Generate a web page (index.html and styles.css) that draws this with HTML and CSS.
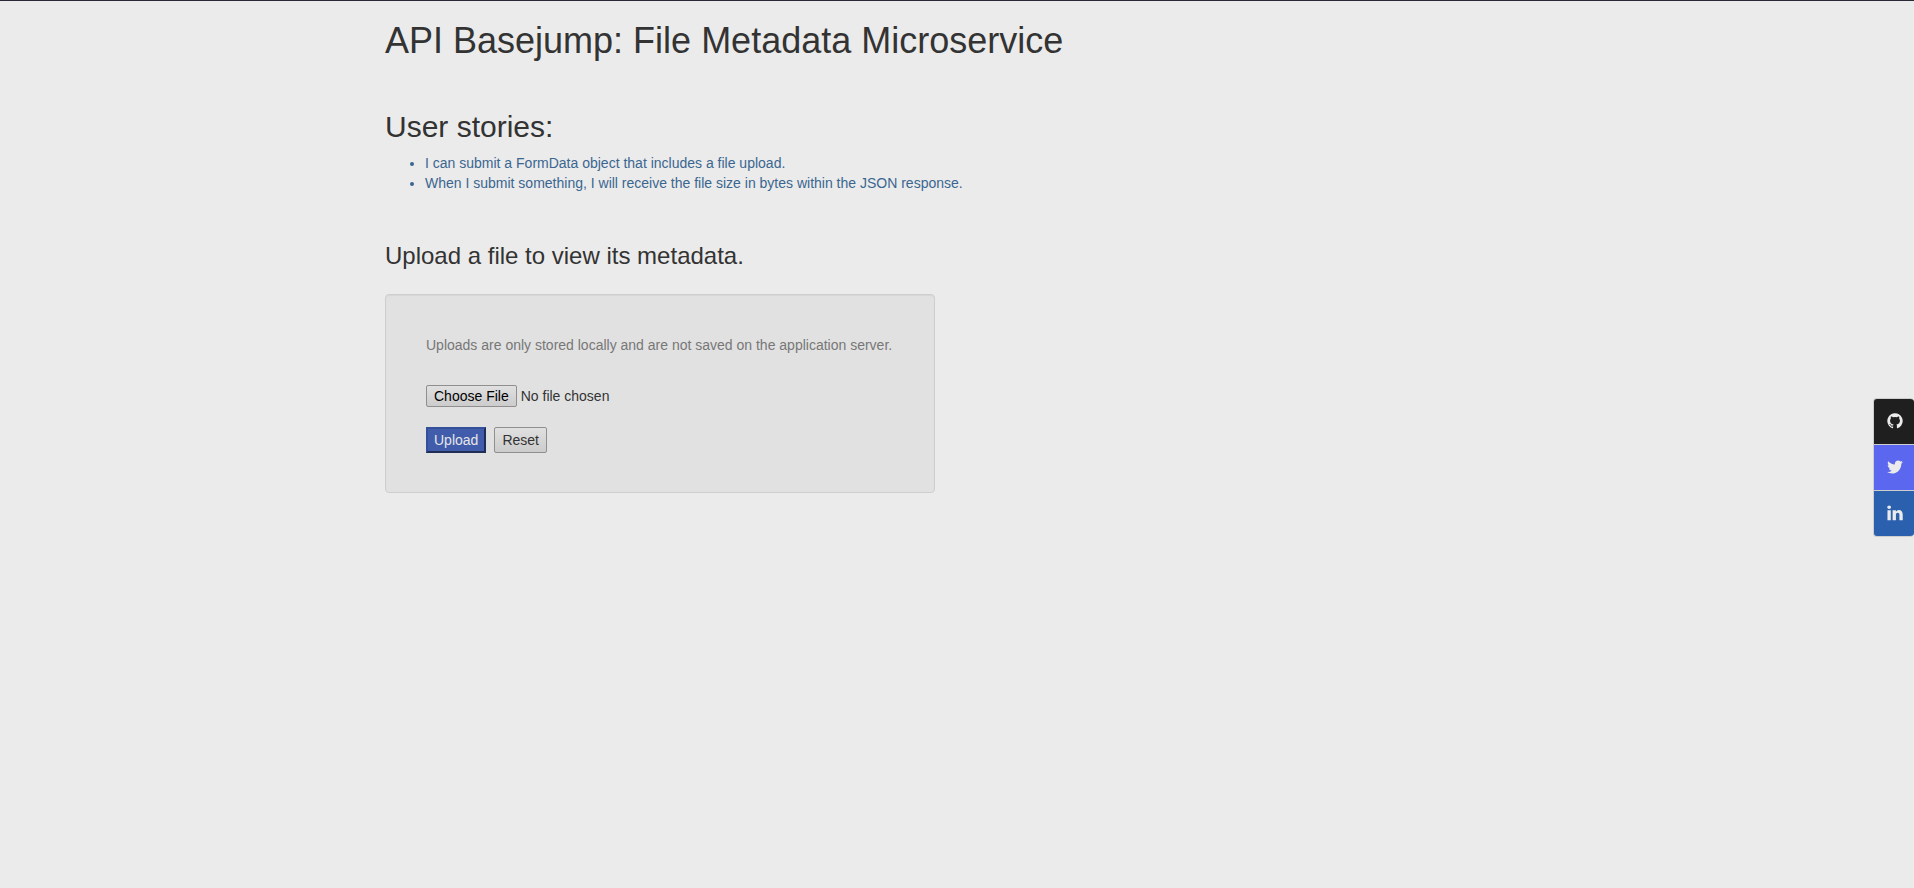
FILE: index.html
```html
<!DOCTYPE html>
<html lang="en">
<head>
<meta charset="utf-8">
<meta name="viewport" content="width=device-width, initial-scale=1">
<title>API Basejump: File Metadata Microservice</title>
<link rel="stylesheet" href="styles.css">
</head>
<body>
<main class="container">
  <h1 class="title">API Basejump: File Metadata Microservice</h1>
  <section class="section">
    <h2 class="stories-title">User stories:</h2>
    <ul class="stories">
      <li>I can submit a FormData object that includes a file upload.</li>
      <li>When I submit something, I will receive the file size in bytes within the JSON response.</li>
    </ul>
  </section>
  <section class="section">
    <h3 class="upload-title">Upload a file to view its metadata.</h3>
    <form class="well">
      <label class="note" for="file">Uploads are only stored locally and are not saved on the application server.</label>
      <input class="file" id="file" type="file" name="file">
      <div class="actions">
        <button class="btn btn-upload" type="submit">Upload</button>
        <button class="btn" type="reset">Reset</button>
      </div>
    </form>
  </section>
</main>
<nav class="social" aria-label="Social links">
  <a class="social-link github" href="#github" aria-label="GitHub"><svg class="icon" viewBox="0 0 1792 1792"><path d="M896 128q209 0 385.5 103t279.5 279.5 103 385.5q0 251-146.5 451.5t-378.5 277.5q-27 5-40-7t-13-30q0-3 .5-76.5t.5-134.5q0-97-52-142 57-6 102.5-18t94-39 81-66.5 53-105 20.5-150.5q0-119-79-206 37-91-8-204-28-9-81 11t-92 44l-38 24q-93-26-192-26t-192 26q-16-11-42.5-27t-83.500-38.500-85-13.500q-45 113-8 204-79 87-79 206 0 85 20.500 150t52.500 105 80.500 67 94 39 102.500 18q-39 36-49 103-21 10-45 15t-57 5-65.500-21.500-55.500-62.500q-19-32-48.500-52t-49.500-24l-20-3q-21 0-29 4.500t-5 11.500 9 14 13 12l7 5q22 10 43.500 38t31.500 51l10 23q13 38 44 61.500t67 30 69.500 7 55.500-3.500l23-4q0 38 .5 88.500t.5 54.500q0 18-13 30t-40 7q-232-77-378.500-277.500t-146.500-451.500q0-209 103-385.500t279.500-279.500 385.500-103z"/></svg></a>
  <a class="social-link twitter" href="#twitter" aria-label="Twitter"><svg class="icon" viewBox="0 0 1792 1792"><path d="M1684 408q-67 98-162 167 1 14 1 42 0 130-38 259.500t-115.500 248.500-184.500 210.500-258 146-323 54.500q-271 0-496-145 35 4 78 4 225 0 401-138-105-2-188-64.500t-114-159.500q33 5 61 5 43 0 85-11-112-23-185.500-111.500t-73.500-205.500v-4q68 38 146 41-66-44-105-115t-39-154q0-88 44-163 121 149 294.500 238.500t371.500 99.500q-8-38-8-74 0-134 94.500-228.500t228.500-94.500q140 0 236 102 109-21 205-78-37 115-142 178 93-10 186-50z"/></svg></a>
  <a class="social-link linkedin" href="#linkedin" aria-label="LinkedIn"><svg class="icon" viewBox="0 0 1792 1792"><path d="M477 625v991h-330v-991h330zm21-306q1 73-50.500 122t-135.500 49h-2q-82 0-132-49t-50-122q0-74 51.500-122.500t134.500-48.500 133 48.500 51 122.500zm1166 729v568h-329v-530q0-105-40.500-164.500t-126.500-59.500q-63 0-105.500 34.500t-63.500 85.500q-11 30-11 81v553h-329q2-399 2-647t-1-296l-1-48h329v144h-2q20-32 41-56t56.500-52 87-43.500 114.500-15.500q171 0 275 113.500t104 332.500z"/></svg></a>
</nav>
</body>
</html>
```
FILE: styles.css
```css
* {
  box-sizing: border-box;
}

body {
  margin: 0;
  border-top: 1px solid #2b2735;
  background: #ebebeb;
  color: #333333;
  font-family: "Liberation Sans", Arial, sans-serif;
  font-size: 14px;
  line-height: 20px;
}

.container {
  max-width: 1144px;
  margin: 0 auto;
  padding-top: 20px;
}

.title,
.stories-title,
.upload-title {
  margin: 0;
  font-weight: 400;
}

.title {
  font-size: 36px;
  line-height: 40px;
}

.section {
  margin-top: 49px;
}

.stories-title {
  font-size: 30px;
  line-height: 33px;
}

.stories {
  margin: 10px 0 0;
  padding-left: 40px;
  color: #3a6690;
}

.upload-title {
  font-size: 24px;
  line-height: 28px;
}

.well {
  display: flex;
  flex-direction: column;
  align-items: flex-start;
  width: fit-content;
  max-width: 100%;
  min-width: 550px;
  margin-top: 24px;
  padding: 40px 40px 39px;
  border: 1px solid #cecece;
  border-radius: 4px;
  background: #e1e1e1;
  box-shadow: inset 0 1px 1px rgba(0, 0, 0, 0.05);
}

.note {
  color: #777777;
}

.file {
  margin-top: 30px;
  font: inherit;
  line-height: 16px;
}

.btn,
.file::file-selector-button {
  padding: 2px 7px;
  border: 1px solid #8f8f8f;
  border-radius: 2px;
  background: linear-gradient(#e0e0e0, #cccccc);
  color: #333333;
  font: inherit;
}

.file::file-selector-button {
  margin: 0 4px 0 0;
  color: #000000;
}

.actions {
  display: flex;
  gap: 8px;
  margin-top: 20px;
}

.btn-upload {
  padding: 1px 6px;
  border: 2px solid;
  border-color: #34509a #202d55 #202d55 #34509a;
  border-radius: 0;
  background: #405cab;
  color: #e6e6e6;
}

.social {
  position: fixed;
  top: 44.8%;
  right: 0;
  display: flex;
  flex-direction: column;
  gap: 1px;
  overflow: hidden;
  border: 1px solid #cecece;
  border-right: 0;
  border-radius: 4px;
  background: #cecece;
}

.social-link {
  display: flex;
  align-items: center;
  justify-content: center;
  width: 40px;
  height: 45px;
  padding-left: 2px;
}

.github {
  background: #1f1f1f;
}

.twitter {
  background: #5a67ee;
}

.linkedin {
  background: #2a60ae;
}

.icon {
  width: 18px;
  height: 18px;
  fill: #ebebeb;
}
```
